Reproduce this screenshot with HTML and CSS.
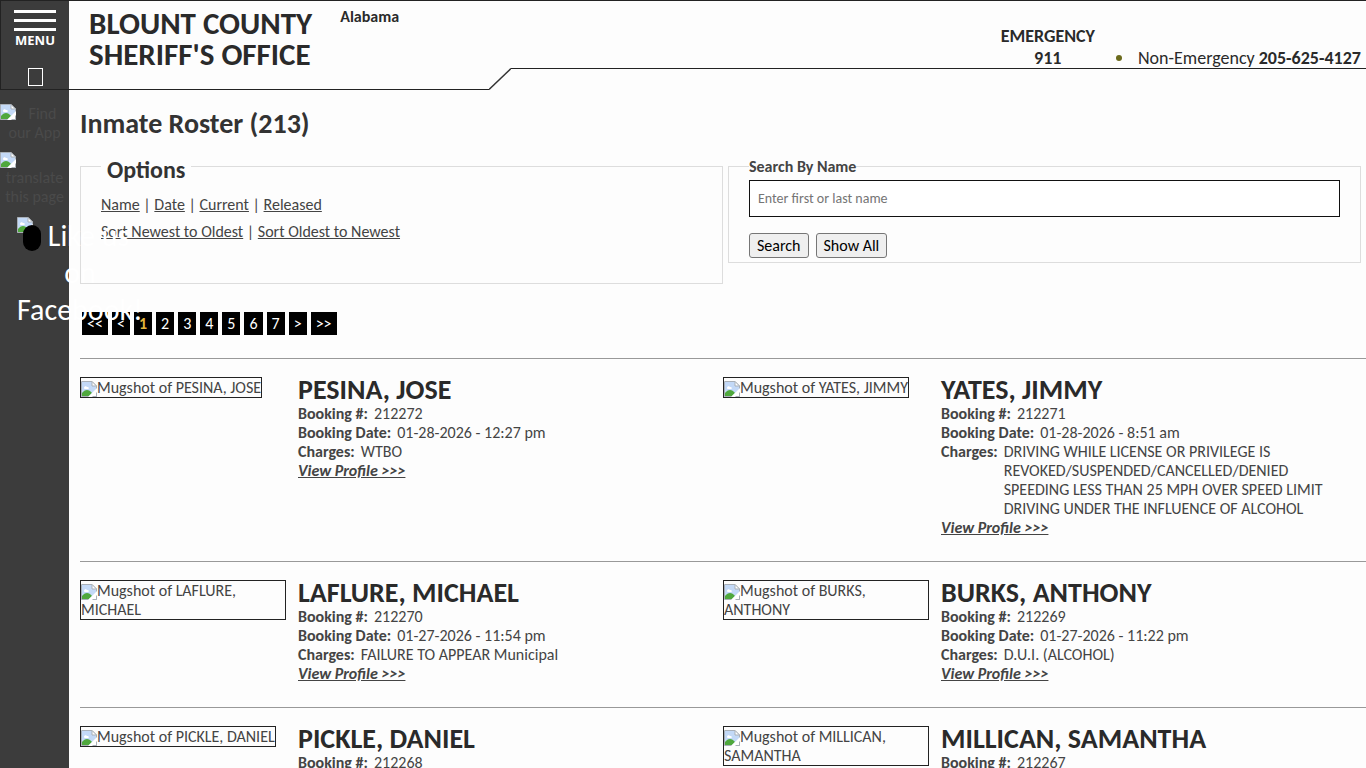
FILE: index.html
```html
<!DOCTYPE html>
<html lang="en">
<head>
    <meta charset="UTF-8">
    <meta name="viewport" content="width=device-width, initial-scale=1.0">
    <title>Inmate Roster - Blount County Sheriff's Office</title>
    <link rel="stylesheet" href="styles.css">
</head>
<body>
    <!-- placeholder picture, reused for every missing image -->
    <svg class="defs" width="0" height="0" aria-hidden="true">
        <symbol id="missing" viewBox="0 0 16 16">
            <path d="M0.500 0.500H11L15.500 5V15.500H0.500Z" fill="#fff" stroke="#a9b0b8"/>
            <path d="M1 1H10.500L15 5.500V9L8 15H1Z" fill="#c3d9f7"/>
            <path d="M3 7C3 5 5.500 5 6 6C8 5.500 8.500 8 7 8H3.500Z" fill="#fff"/>
            <path d="M1 15V12C4 8 8 8 11 12L8 15Z" fill="#4fa83d"/>
            <path d="M16 7V11L11 16H7Z" fill="#fff"/>
            <path d="M11 0.500V5H15.500Z" fill="#fff" stroke="#a9b0b8"/>
            <path d="M12 15.500H15.500V12" fill="none" stroke="#a9b0b8"/>
        </symbol>
    </svg>

    <header class="header">
        <div class="header-left">
            <button class="menu-button" type="button">
                <span class="bar"></span>
                <span class="bar"></span>
                <span class="bar"></span>
                <span class="menu-label">MENU</span>
                <span class="glyph"></span>
            </button>
            <div class="agency">BLOUNT COUNTY<br>SHERIFF'S OFFICE</div>
            <div class="state">Alabama</div>
        </div>
        <svg class="slope" viewBox="0 0 22 90" aria-hidden="true">
            <path d="M0 89.500L22 68.500" fill="none" stroke="#333" stroke-width="1.500"/>
        </svg>
        <div class="header-right">
            <div class="emergency">EMERGENCY<br>911</div>
            <span class="dot"></span>
            <div class="non-emergency">Non-Emergency <b>205-625-4127</b></div>
        </div>
    </header>

    <div class="page">
        <nav class="sidebar">
            <a class="side-link" href="#"><svg class="missing"><use href="#missing"/></svg> Find our App</a>
            <a class="side-link" href="#"><svg class="missing"><use href="#missing"/></svg> translate this page</a>
            <a class="facebook" href="#">
                <span class="like"><svg class="like-icon" viewBox="0 0 24 36"><use href="#missing" width="16" height="16"/><rect x="6" y="8" width="18" height="26" rx="9"/></svg> Like us</span>
                <span>on</span>
                <span>Facebook!</span>
            </a>
        </nav>

        <main class="content">
            <h1>Inmate Roster (213)</h1>

            <div class="filters">
                <fieldset class="options">
                    <legend>Options</legend>
                    <p><a href="#">Name</a> | <a href="#">Date</a> | <a href="#">Current</a> | <a href="#">Released</a></p>
                    <p><a href="#">Sort Newest to Oldest</a> | <a href="#">Sort Oldest to Newest</a></p>
                </fieldset>
                <fieldset class="search">
                    <legend><label for="name">Search By Name</label></legend>
                    <input type="text" id="name" placeholder="Enter first or last name">
                    <div class="buttons">
                        <button type="submit">Search</button>
                        <button type="button">Show All</button>
                    </div>
                </fieldset>
            </div>

            <div class="pages">
                <a href="#">&lt;&lt;</a>
                <a href="#">&lt;</a>
                <a href="#" class="current">1</a>
                <a href="#">2</a>
                <a href="#">3</a>
                <a href="#">4</a>
                <a href="#">5</a>
                <a href="#">6</a>
                <a href="#">7</a>
                <a href="#">&gt;</a>
                <a href="#">&gt;&gt;</a>
            </div>

            <div class="row">
                <div class="inmate">
                    <div class="photo"><a href="#" class="mugshot"><svg class="missing"><use href="#missing"/></svg>Mugshot of PESINA, JOSE</a></div>
                    <div class="details">
                        <h2>PESINA, JOSE</h2>
                        <div class="field"><b>Booking #:</b><span>212272</span></div>
                        <div class="field"><b>Booking Date:</b><span>01-28-2026 - 12:27 pm</span></div>
                        <div class="field"><b>Charges:</b><span>WTBO</span></div>
                        <a href="#" class="profile">View Profile &gt;&gt;&gt;</a>
                    </div>
                </div>
                <div class="inmate">
                    <div class="photo"><a href="#" class="mugshot"><svg class="missing"><use href="#missing"/></svg>Mugshot of YATES, JIMMY</a></div>
                    <div class="details">
                        <h2>YATES, JIMMY</h2>
                        <div class="field"><b>Booking #:</b><span>212271</span></div>
                        <div class="field"><b>Booking Date:</b><span>01-28-2026 - 8:51 am</span></div>
                        <div class="field"><b>Charges:</b><span>DRIVING WHILE LICENSE OR PRIVILEGE IS<br>REVOKED/SUSPENDED/CANCELLED/DENIED<br>SPEEDING LESS THAN 25 MPH OVER SPEED LIMIT<br>DRIVING UNDER THE INFLUENCE OF ALCOHOL</span></div>
                        <a href="#" class="profile">View Profile &gt;&gt;&gt;</a>
                    </div>
                </div>
            </div>

            <div class="row">
                <div class="inmate">
                    <div class="photo"><a href="#" class="mugshot"><svg class="missing"><use href="#missing"/></svg>Mugshot of LAFLURE, MICHAEL</a></div>
                    <div class="details">
                        <h2>LAFLURE, MICHAEL</h2>
                        <div class="field"><b>Booking #:</b><span>212270</span></div>
                        <div class="field"><b>Booking Date:</b><span>01-27-2026 - 11:54 pm</span></div>
                        <div class="field"><b>Charges:</b><span>FAILURE TO APPEAR Municipal</span></div>
                        <a href="#" class="profile">View Profile &gt;&gt;&gt;</a>
                    </div>
                </div>
                <div class="inmate">
                    <div class="photo"><a href="#" class="mugshot"><svg class="missing"><use href="#missing"/></svg>Mugshot of BURKS, ANTHONY</a></div>
                    <div class="details">
                        <h2>BURKS, ANTHONY</h2>
                        <div class="field"><b>Booking #:</b><span>212269</span></div>
                        <div class="field"><b>Booking Date:</b><span>01-27-2026 - 11:22 pm</span></div>
                        <div class="field"><b>Charges:</b><span>D.U.I. (ALCOHOL)</span></div>
                        <a href="#" class="profile">View Profile &gt;&gt;&gt;</a>
                    </div>
                </div>
            </div>

            <div class="row">
                <div class="inmate">
                    <div class="photo"><a href="#" class="mugshot"><svg class="missing"><use href="#missing"/></svg>Mugshot of PICKLE, DANIEL</a></div>
                    <div class="details">
                        <h2>PICKLE, DANIEL</h2>
                        <div class="field"><b>Booking #:</b><span>212268</span></div>
                    </div>
                </div>
                <div class="inmate">
                    <div class="photo"><a href="#" class="mugshot"><svg class="missing"><use href="#missing"/></svg>Mugshot of MILLICAN, SAMANTHA</a></div>
                    <div class="details">
                        <h2>MILLICAN, SAMANTHA</h2>
                        <div class="field"><b>Booking #:</b><span>212267</span></div>
                    </div>
                </div>
            </div>
        </main>
    </div>
</body>
</html>
```
FILE: styles.css
```css
* {
    box-sizing: border-box;
}

html {
    scrollbar-width: none;
}

body {
    font-family: Calibri, Carlito, Lato, sans-serif;
    font-size: 16px;
    line-height: 19px;
    color: #444;
    background-color: #fdfdfd;
    margin: 0;
    min-height: 100vh;
    display: flex;
    flex-direction: column;
}

a {
    color: #444;
}

.defs {
    position: absolute;
}

.missing {
    width: 16px;
    height: 16px;
    vertical-align: bottom;
}

/* header */
.header {
    display: flex;
    align-items: flex-start;
    flex-shrink: 0;
    height: 90px;
    border-top: 1px solid #222;
    color: #2a2a2a;
}

.header-left {
    display: flex;
    width: 489px;
    height: 89px;
    border-bottom: 1px solid #222;
}

.menu-button {
    width: 69px;
    background-color: #3c3c3c;
    border: none;
    border-left: 1px solid #222;
    color: #fff;
    font-family: inherit;
    padding: 9px 13px 0;
    display: flex;
    flex-direction: column;
    align-items: center;
    cursor: pointer;
}

.bar {
    width: 42px;
    height: 3px;
    margin-bottom: 6px;
    background-color: #fff;
}

.menu-label {
    font-family: "Open Sans", sans-serif;
    font-size: 13px;
    font-weight: bold;
    line-height: 14px;
    margin-top: -4px;
}

.glyph {
    width: 15px;
    height: 18px;
    margin-top: 21px;
    border: 1px solid #fff;
}

.agency {
    font-size: 31px;
    font-weight: bold;
    line-height: 31px;
    padding: 7px 0 0 20px;
    white-space: nowrap;
}

.state {
    font-weight: bold;
    padding: 6px 0 0 28px;
}

.slope {
    width: 22px;
    height: 90px;
    margin-top: -1px;
    flex-shrink: 0;
}

.header-right {
    flex: 1;
    height: 68px;
    border-bottom: 1px solid #222;
    display: flex;
    justify-content: flex-end;
    align-items: flex-end;
    font-size: 18px;
    line-height: 22px;
    padding-right: 5px;
}

.emergency,
.non-emergency {
    margin-bottom: -1px;
}

.emergency {
    font-weight: bold;
    text-align: center;
}

.dot {
    width: 6px;
    height: 6px;
    margin: 0 16px 7px 21px;
    border-radius: 50%;
    background-color: #6b6a1c;
}

/* sidebar */
.page {
    flex: 1;
    display: flex;
}

.sidebar {
    position: relative;
    z-index: 1;
    width: 69px;
    flex-shrink: 0;
    padding-top: 14px;
    background-color: #3c3c3c;
    text-align: center;
}

.side-link {
    display: block;
    margin-bottom: 10px;
    color: #4a4a4a;
    text-decoration: none;
}

.side-link .missing {
    float: left;
}

/* wider than the sidebar, so it runs over the content */
.facebook {
    display: flex;
    flex-direction: column;
    align-items: center;
    width: 126px;
    margin-top: 11px;
    margin-left: 17px;
    color: #fff;
    font-size: 30px;
    line-height: 37px;
    text-decoration: none;
}

.like {
    align-self: flex-start;
    white-space: nowrap;
}

.like-icon {
    width: 24px;
    height: 36px;
    vertical-align: top;
}

/* content */
.content {
    flex: 1;
    padding-left: 11px;
}

h1 {
    font-size: 28px;
    line-height: 32px;
    margin: 18px 0 12px;
    color: #333;
}

.filters {
    display: grid;
    grid-template-columns: 1fr 1fr;
    align-items: start;
}

fieldset {
    margin: 0;
    border: 1px solid #ddd;
}

.options {
    height: 132px;
    padding: 15px 20px;
}

.options legend {
    font-size: 24px;
    font-weight: bold;
    line-height: 20px;
    color: #333;
    padding: 8px 6px 0;
}

.options p {
    margin: 0 0 8px;
}

.search {
    margin: 5px 5px 0;
    padding: 4px 20px;
}

.search legend {
    padding: 0;
    font-weight: bold;
}

.search input {
    display: block;
    width: 100%;
    height: 37px;
    border: 1px solid #111;
    padding: 0 8px;
    font-family: inherit;
    font-size: 14px;
}

.buttons {
    display: flex;
    gap: 7px;
    margin-top: 16px;
}

.buttons button {
    font-family: inherit;
    font-size: 16px;
    line-height: 19px;
    padding: 2px 7px;
    border: 1px solid #767676;
    border-radius: 3px;
    background-color: #efefef;
    color: #000;
}

.pages {
    display: flex;
    gap: 4px;
    margin: 28px 2px 23px;
}

.pages a {
    padding: 2px 5px;
    background-color: #000;
    color: #fff;
    text-decoration: none;
}

.pages .current {
    color: #e5b53c;
    font-weight: bold;
}

.row {
    display: grid;
    grid-template-columns: 1fr 1fr;
    border-top: 1px solid #999;
    padding: 17px 0 24px;
}

.inmate {
    display: flex;
}

.photo {
    width: 206px;
    margin: 1px 12px 0 0;
    flex-shrink: 0;
}

.mugshot {
    display: inline-block;
    border: 1px solid #222;
    text-decoration: none;
}

h2 {
    margin: 0;
    font-size: 28px;
    line-height: 28px;
    color: #2a2a2a;
}

.field {
    display: flex;
    gap: 6px;
}

.field b {
    white-space: nowrap;
}

.profile {
    font-weight: bold;
    font-style: italic;
}
```
